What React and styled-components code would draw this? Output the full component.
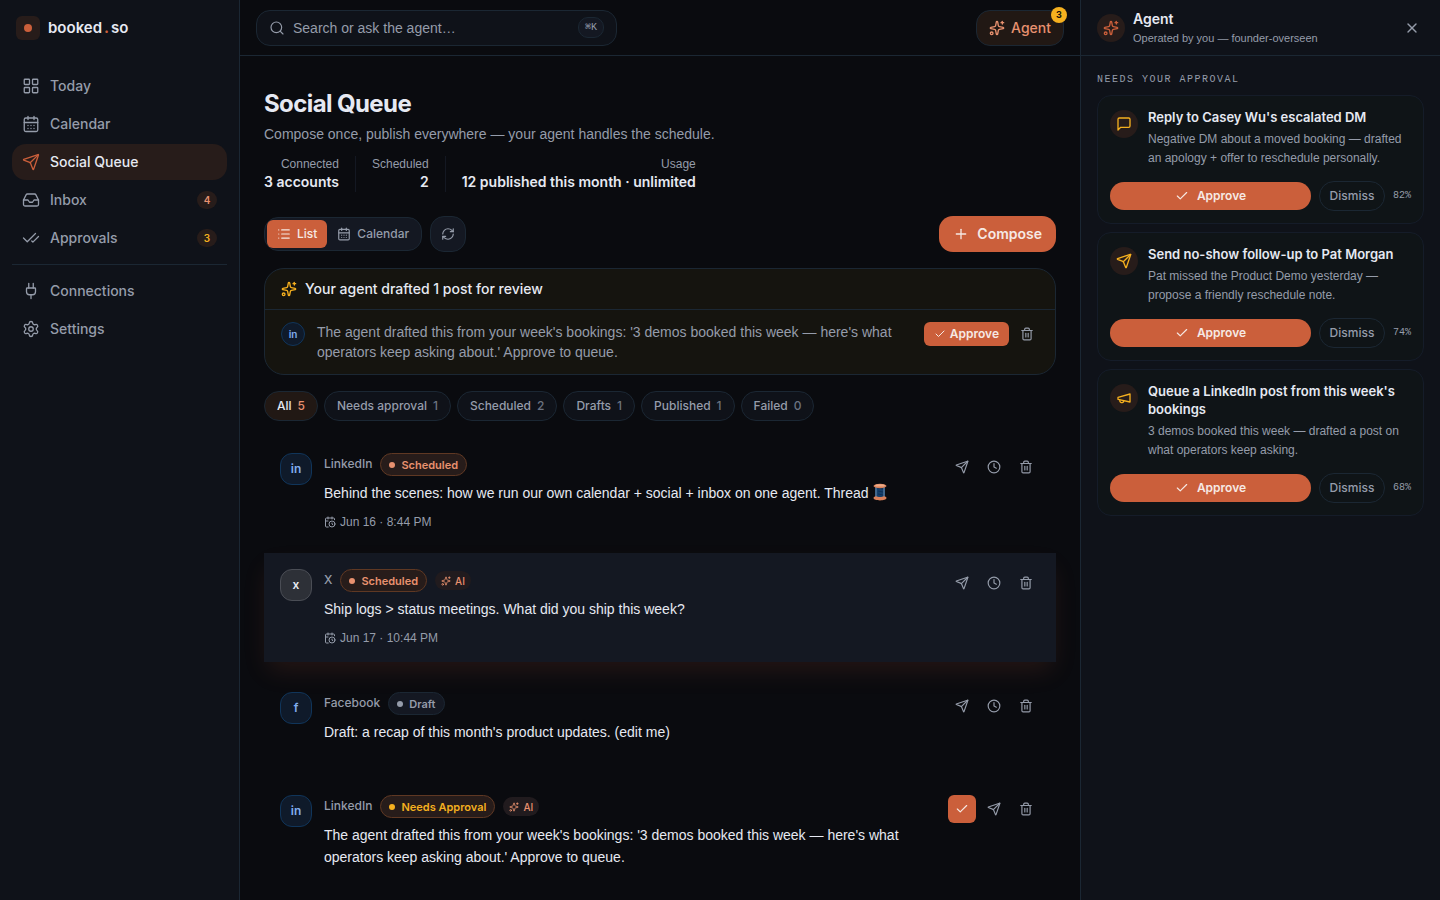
import React from "react";
import styled, { createGlobalStyle, css } from "styled-components";
import {
  LayoutGrid, CalendarDays, Send, Inbox, CheckCheck, Plug, Settings, Search,
  Sparkles, X, Check, List, RefreshCw, Plus, Trash2, Clock, CalendarClock,
} from "lucide-react";

const c = {
  bg: "#0a0b0f",
  side: "#0f1219",
  raised: "#141822",
  line: "#1b2733",
  faint: "#151c29",
  text: "#e6e9f2",
  muted: "#959caa",
  dim: "#6b7280",
  accent: "#cb5f3b",
  peach: "#e8916f",
  tint: "#271c1a",
  tintDark: "#211814",
  amber: "#f5b01f",
};
const prose = `"Liberation Sans", Arial, sans-serif`;

const GlobalStyle = createGlobalStyle`
  * { box-sizing: border-box; }
  body { margin: 0; background: ${c.bg}; }
  body, button, input {
    font-family: Inter, "Liberation Sans", sans-serif;
    font-size: 14px;
    line-height: 20px;
    color: ${c.text};
  }
  h1, h2, h3, p, ul, dl, dd { margin: 0; padding: 0; }
  p, dt, input { font-family: ${prose}; }
  ul { list-style: none; }
  button { border: 0; padding: 0; background: none; cursor: pointer; }
  a { color: inherit; text-decoration: none; }
  svg { flex: none; display: block; }
`;

const Shell = styled.div`
  display: grid;
  grid-template-columns: 240px minmax(0, 1fr) 360px;
  height: 100vh;
  overflow: hidden;
`;

/* Sidebar */
const Sidebar = styled.aside`
  background: ${c.side};
  border-right: 1px solid ${c.line};
`;
const Brand = styled.a`
  display: flex;
  align-items: center;
  gap: 8px;
  height: 56px;
  padding: 0 16px;
  font-size: 15px;
  font-weight: 600;
`;
const BrandMark = styled.span`
  display: grid;
  place-items: center;
  width: 24px;
  height: 24px;
  border-radius: 6px;
  background: ${c.tint};
  &::after {
    content: "";
    width: 8px;
    height: 8px;
    border-radius: 50%;
    background: ${c.accent};
  }
`;
const BrandName = styled.span`
  display: flex;
  gap: 2px;
`;
const BrandDot = styled.span`
  font-weight: 700;
  color: ${c.accent};
`;
const NavList = styled.ul`
  display: grid;
  gap: 2px;
  margin: 0 12px;
  padding: ${(p) => (p.$second ? "8px 0" : "12px 0 8px")};
  border-top: ${(p) => (p.$second ? `1px solid ${c.line}` : "0")};
`;
const NavLink = styled.a`
  display: flex;
  align-items: center;
  gap: 10px;
  height: 36px;
  padding: 0 10px;
  border-radius: 14px;
  font-weight: 500;
  color: ${(p) => (p.$active ? c.text : c.muted)};
  background: ${(p) => (p.$active ? c.tint : "transparent")};
  svg { color: ${(p) => (p.$active ? c.accent : "inherit")}; }
`;
const Count = styled.span`
  margin-left: auto;
  width: 20px;
  border-radius: 9px;
  background: ${c.tint};
  color: ${(p) => p.$color};
  font-size: 10px;
  font-weight: 600;
  line-height: 18px;
  text-align: center;
`;

/* Centre column */
const Center = styled.div`
  display: flex;
  flex-direction: column;
  min-height: 0;
`;
const TopBar = styled.header`
  display: flex;
  align-items: center;
  justify-content: space-between;
  flex: none;
  height: 56px;
  padding: 0 16px;
  border-bottom: 1px solid ${c.line};
`;
const SearchBox = styled.label`
  display: flex;
  align-items: center;
  gap: 8px;
  width: 100%;
  max-width: 361px;
  height: 36px;
  padding: 0 12px;
  border: 1px solid ${c.line};
  border-radius: 14px;
  background: ${c.side};
  color: ${c.muted};
`;
const SearchInput = styled.input`
  flex: 1;
  min-width: 0;
  padding: 0;
  border: 0;
  outline: 0;
  background: none;
  &::placeholder { color: ${c.muted}; opacity: 1; }
`;
const Kbd = styled.kbd`
  width: 26px;
  border: 1px solid ${c.line};
  border-radius: 10px;
  background: ${c.raised};
  font-family: "Liberation Mono", "DejaVu Sans Mono", monospace;
  font-size: 10px;
  line-height: 19px;
  text-align: center;
`;
const AgentButton = styled.button`
  position: relative;
  display: flex;
  align-items: center;
  gap: 6px;
  height: 36px;
  padding: 0 12px;
  border: 1px solid ${c.line};
  border-radius: 14px;
  background: ${c.tintDark};
  color: ${c.peach};
  font-weight: 500;
`;
const AgentBadge = styled.span`
  position: absolute;
  top: -4px;
  right: -4px;
  width: 16px;
  border-radius: 8px;
  background: ${c.amber};
  color: #14100a;
  font-size: 9px;
  font-weight: 700;
  line-height: 16px;
  text-align: center;
`;
const Content = styled.main`
  flex: 1;
  min-height: 0;
  padding: 32px 24px 0;
  overflow: hidden;
`;
const Title = styled.h1`
  font-size: 24px;
  line-height: 32px;
  font-weight: 700;
  letter-spacing: -0.6px;
`;
const Subtitle = styled.p`
  margin-top: 4px;
  color: ${c.muted};
`;
const Stats = styled.dl`
  display: flex;
  align-items: center;
  margin-top: 12px;
`;
const Stat = styled.div`
  text-align: right;
  & + & {
    margin-left: 16px;
    padding-left: 16px;
    border-left: 1px solid ${c.raised};
  }
  dt { font-size: 12px; line-height: 16px; color: ${c.muted}; }
  dd { font-weight: 600; }
`;
const Toolbar = styled.div`
  display: flex;
  align-items: center;
  gap: 8px;
  margin: 24px 0 16px;
`;
const Segments = styled.div`
  display: flex;
  padding: 2px;
  border: 1px solid ${c.line};
  border-radius: 14px;
  background: ${c.raised};
`;
const Segment = styled.button`
  display: flex;
  align-items: center;
  gap: 6px;
  height: 28px;
  padding: 0 10px;
  border-radius: 6px;
  font-size: 12px;
  font-weight: 500;
  color: ${(p) => (p.$active ? "#f6e9e4" : c.muted)};
  background: ${(p) => (p.$active ? c.accent : "transparent")};
`;
const Refresh = styled.button`
  display: grid;
  place-items: center;
  width: 36px;
  height: 36px;
  border: 1px solid ${c.line};
  border-radius: 14px;
  background: ${c.raised};
  color: ${c.muted};
`;
const Compose = styled.button`
  display: flex;
  align-items: center;
  gap: 8px;
  height: 36px;
  margin-left: auto;
  padding: 0 14px;
  border-radius: 14px;
  background: ${c.accent};
  color: #f6e9e4;
  font-weight: 600;
`;
const Drafted = styled.section`
  border: 1px solid ${c.line};
  border-radius: 20px;
  background: #15140f;
`;
const DraftedHead = styled.header`
  display: flex;
  align-items: center;
  gap: 8px;
  padding: 10px 16px;
  border-bottom: 1px solid ${c.line};
  color: ${c.amber};
  h2 { font-size: 14px; font-weight: 500; color: ${c.text}; }
`;
const DraftedBody = styled.div`
  display: flex;
  align-items: flex-start;
  gap: 12px;
  padding: 12px 16px;
  p { flex: 1; color: ${c.muted}; }
`;
const DraftedActions = styled.div`
  display: flex;
  gap: 6px;
`;
const SmallApprove = styled.button`
  display: flex;
  align-items: center;
  gap: 4px;
  height: 24px;
  padding: 0 10px;
  border-radius: 6px;
  background: ${c.accent};
  color: #f6e9e4;
  font-size: 12px;
  font-weight: 600;
`;
const tones = {
  blue: css`border-color: #10355a; background: #0f1a2a; color: #82adee;`,
  grey: css`border-color: #4a4d55; background: #2d3037; color: ${c.text};`,
};
const Avatar = styled.span`
  display: grid;
  place-items: center;
  flex: none;
  width: ${(p) => (p.$small ? 24 : 32)}px;
  height: ${(p) => (p.$small ? 24 : 32)}px;
  border: 1px solid;
  border-radius: 12px;
  font-size: ${(p) => (p.$small ? 10 : 12)}px;
  font-weight: 600;
  ${(p) => tones[p.$tone]}
`;
const Filters = styled.div`
  display: flex;
  gap: 6px;
  margin: 16px 0;
`;
const Filter = styled.button`
  display: flex;
  align-items: center;
  gap: 6px;
  height: 30px;
  padding: 0 12px;
  border: 1px solid ${c.line};
  border-radius: 15px;
  background: ${(p) => (p.$active ? c.tintDark : c.side)};
  color: ${(p) => (p.$active ? c.text : c.muted)};
  font-size: 12px;
  font-weight: 500;
  span { color: ${(p) => (p.$active ? c.peach : c.dim)}; }
`;
const Posts = styled.ul`
  display: grid;
  gap: 7px;
`;
const Post = styled.li`
  display: flex;
  align-items: flex-start;
  gap: 12px;
  min-height: 96px;
  padding: 16px;
  ${(p) =>
    p.$raised &&
    css`
      margin-bottom: 7px;
      background: ${c.raised};
      box-shadow: 0 12px 24px -4px rgba(203, 95, 59, 0.14);
    `}
`;
const PostBody = styled.div`
  flex: 1;
  min-width: 0;
`;
const PostMeta = styled.div`
  display: flex;
  align-items: flex-start;
  gap: 8px;
  height: 23px;
  font-size: 12px;
  font-weight: 500;
  line-height: 22px;
  color: ${c.muted};
`;
const statusTones = {
  scheduled: css`border-color: #5f3823; background: ${c.tint}; color: ${c.peach};`,
  approval: css`border-color: #5f3823; background: ${c.tint}; color: ${c.amber};`,
  draft: css`border-color: ${c.line}; background: ${c.raised}; color: ${c.muted};`,
};
const Status = styled.span`
  display: flex;
  align-items: center;
  gap: 6px;
  height: 23px;
  padding: 0 8px;
  border: 1px solid;
  border-radius: 12px;
  font-size: 11px;
  font-weight: 600;
  ${(p) => statusTones[p.$tone]}
  &::before {
    content: "";
    width: 6px;
    height: 6px;
    border-radius: 50%;
    background: currentColor;
  }
`;
const AiTag = styled.span`
  display: flex;
  align-items: center;
  gap: 4px;
  height: 19px;
  margin-top: 2px;
  padding: 0 6px;
  border-radius: 10px;
  background: #211b1e;
  color: ${c.peach};
  font-size: 10px;
`;
const PostText = styled.p`
  margin-top: 6px;
  line-height: 22px;
`;
const PostDate = styled.p`
  display: flex;
  align-items: center;
  gap: 4px;
  margin-top: 10px;
  font-size: 12px;
  line-height: 16px;
  color: ${c.muted};
`;
const PostActions = styled.div`
  display: flex;
  gap: 4px;
`;
const IconButton = styled.button`
  display: grid;
  place-items: center;
  width: ${(p) => (p.$small ? 24 : 28)}px;
  height: ${(p) => (p.$small ? 24 : 28)}px;
  border-radius: 6px;
  color: ${(p) => (p.$filled ? "#f6e9e4" : c.muted)};
  background: ${(p) => (p.$filled ? c.accent : "transparent")};
`;
const InlineSpool = styled.svg`
  display: inline-block;
  vertical-align: -3px;
`;

/* Agent panel */
const Panel = styled.aside`
  background: ${c.side};
  border-left: 1px solid ${c.line};
`;
const PanelHead = styled.header`
  display: flex;
  align-items: center;
  gap: 8px;
  height: 56px;
  padding: 0 16px;
  border-bottom: 1px solid ${c.line};
  h2 { font-size: 14px; font-weight: 600; line-height: 20px; }
  p { font-size: 11px; line-height: 18px; color: ${c.muted}; }
  > div { flex: 1; }
`;
const Disc = styled.span`
  display: grid;
  place-items: center;
  flex: none;
  width: 28px;
  height: 28px;
  border-radius: 50%;
  background: ${c.tint};
  color: ${(p) => p.$color};
`;
const PanelBody = styled.div`
  display: grid;
  gap: 8px;
  padding: 16px 16px 0;
`;
const PanelLabel = styled.h3`
  font-family: "Liberation Mono", monospace;
  font-size: 10px;
  font-weight: 400;
  line-height: 15px;
  letter-spacing: 1.5px;
  text-transform: uppercase;
  color: ${c.muted};
`;
const Card = styled.article`
  padding: 12px;
  border: 1px solid ${c.faint};
  border-radius: 14px;
  background: #0f1417;
`;
const CardTop = styled.div`
  display: flex;
  gap: 10px;
  h3 { font-size: 13px; font-weight: 600; line-height: 18px; }
  p { margin-top: 4px; font-size: 12px; line-height: 19px; color: ${c.muted}; }
  ${Disc} { margin-top: 2px; }
`;
const CardActions = styled.div`
  display: flex;
  align-items: center;
  gap: 8px;
  margin-top: 13px;
  font-size: 12px;
`;
const Approve = styled.button`
  display: flex;
  align-items: center;
  justify-content: center;
  gap: 8px;
  flex: 1;
  height: 28px;
  border-radius: 14px;
  background: ${c.accent};
  color: #f6e9e4;
  font-size: 12px;
  font-weight: 600;
`;
const Dismiss = styled.button`
  width: 66px;
  height: 30px;
  border: 1px solid ${c.line};
  border-radius: 15px;
  color: ${c.muted};
  font-size: 12px;
  font-weight: 500;
`;
const Score = styled.span`
  font-family: "Liberation Mono", monospace;
  font-size: 10px;
  color: ${c.muted};
`;

const stroke = {
  viewBox: "0 0 24 24", fill: "none", stroke: "currentColor",
  strokeLinecap: "round", strokeLinejoin: "round", "aria-hidden": true,
};
const Message = ({ size, strokeWidth }) => (
  <svg width={size} height={size} strokeWidth={strokeWidth} {...stroke}>
    <path d="M21 15a2 2 0 0 1-2 2H7l-4 4V5a2 2 0 0 1 2-2h14a2 2 0 0 1 2 2z" />
  </svg>
);
const Megaphone = ({ size, strokeWidth }) => (
  <svg width={size} height={size} strokeWidth={strokeWidth} {...stroke}>
    <path d="m3 11 18-5v12L3 14v-3z" />
    <path d="M11.6 16.8a3 3 0 1 1-5.8-1.6" />
  </svg>
);
const Spool = () => (
  <InlineSpool width="16" height="18" viewBox="0 0 16 18" role="img" aria-label="Thread">
    <rect x="3" y="3" width="10" height="12" fill="#153f6b" />
    <path d="M4 3v12M12 4v11" stroke="#6c8fae" strokeWidth="1" />
    <path d="M6 5l5 1M6 8l5 1M6 11l5 1" stroke="#0d2f55" strokeWidth="1" />
    <ellipse cx="8" cy="3" rx="6.5" ry="2.2" fill="#d9805a" />
    <ellipse cx="8" cy="2.4" rx="5" ry="1.2" fill="#efab86" />
    <path d="M1.500 15c0-1.200 1.500-1.600 2.500-1.800 2 .9 6 .9 8 0 1 .2 2.500.6 2.500 1.800 0 3.200-13 3.200-13 0z" fill="#d9805a" />
  </InlineSpool>
);

const mainNav = [
  { label: "Today", Icon: LayoutGrid },
  { label: "Calendar", Icon: CalendarDays },
  { label: "Social Queue", Icon: Send, active: true },
  { label: "Inbox", Icon: Inbox, count: 4, color: c.peach },
  { label: "Approvals", Icon: CheckCheck, count: 3, color: c.amber },
];
const moreNav = [
  { label: "Connections", Icon: Plug },
  { label: "Settings", Icon: Settings },
];
const filters = [
  ["All", 5], ["Needs approval", 1], ["Scheduled", 2],
  ["Drafts", 1], ["Published", 1], ["Failed", 0],
];
const agentDraft =
  "The agent drafted this from your week's bookings: '3 demos booked this week — here's what operators keep asking about.' Approve to queue.";
const posts = [
  { mark: "in", tone: "blue", name: "LinkedIn", status: "Scheduled", kind: "scheduled",
    text: <>Behind the scenes: how we run our own calendar + social + inbox on one agent. Thread <Spool /></>,
    date: "Jun 16 · 8:44 PM" },
  { mark: "x", tone: "grey", name: "X", status: "Scheduled", kind: "scheduled", ai: true, raised: true,
    text: "Ship logs > status meetings. What did you ship this week?", date: "Jun 17 · 10:44 PM" },
  { mark: "f", tone: "blue", name: "Facebook", status: "Draft", kind: "draft",
    text: "Draft: a recap of this month's product updates. (edit me)" },
  { mark: "in", tone: "blue", name: "LinkedIn", status: "Needs Approval", kind: "approval", ai: true,
    text: agentDraft },
];
const tasks = [
  { Icon: Message, title: "Reply to Casey Wu's escalated DM", score: "82%",
    text: "Negative DM about a moved booking — drafted an apology + offer to reschedule personally." },
  { Icon: Send, title: "Send no-show follow-up to Pat Morgan", score: "74%",
    text: "Pat missed the Product Demo yesterday — propose a friendly reschedule note." },
  { Icon: Megaphone, title: "Queue a LinkedIn post from this week's bookings", score: "68%",
    text: "3 demos booked this week — drafted a post on what operators keep asking." },
];

function Nav({ items, second }) {
  return (
    <NavList $second={second}>
      {items.map(({ label, Icon, active, count, color }) => (
        <li key={label}>
          <NavLink href="#" $active={active}>
            <Icon size={18} strokeWidth={1.75} />
            {label}
            {count && <Count $color={color}>{count}</Count>}
          </NavLink>
        </li>
      ))}
    </NavList>
  );
}

function PostRow({ post }) {
  const needsApproval = post.kind === "approval";
  return (
    <Post $raised={post.raised}>
      <Avatar $tone={post.tone}>{post.mark}</Avatar>
      <PostBody>
        <PostMeta>
          <span>{post.name}</span>
          <Status $tone={post.kind}>{post.status}</Status>
          {post.ai && <AiTag><Sparkles size={10} />AI</AiTag>}
        </PostMeta>
        <PostText>{post.text}</PostText>
        {post.date && <PostDate><CalendarClock size={12} />{post.date}</PostDate>}
      </PostBody>
      <PostActions>
        {needsApproval && <IconButton $filled aria-label="Approve"><Check size={14} /></IconButton>}
        <IconButton aria-label="Publish now"><Send size={14} /></IconButton>
        {!needsApproval && <IconButton aria-label="Reschedule"><Clock size={14} /></IconButton>}
        <IconButton aria-label="Delete"><Trash2 size={14} /></IconButton>
      </PostActions>
    </Post>
  );
}

export default function App() {
  return (
    <>
      <GlobalStyle />
      <Shell>
        <Sidebar>
          <Brand href="#">
            <BrandMark />
            <BrandName>booked<BrandDot>.</BrandDot>so</BrandName>
          </Brand>
          <nav>
            <Nav items={mainNav} />
            <Nav items={moreNav} second />
          </nav>
        </Sidebar>

        <Center>
          <TopBar>
            <SearchBox>
              <Search size={16} strokeWidth={1.75} />
              <SearchInput aria-label="Search" placeholder="Search or ask the agent…" />
              <Kbd>⌘K</Kbd>
            </SearchBox>
            <AgentButton>
              <Sparkles size={16} />
              Agent
              <AgentBadge>3</AgentBadge>
            </AgentButton>
          </TopBar>

          <Content>
            <Title>Social Queue</Title>
            <Subtitle>Compose once, publish everywhere — your agent handles the schedule.</Subtitle>
            <Stats>
              <Stat><dt>Connected</dt><dd>3 accounts</dd></Stat>
              <Stat><dt>Scheduled</dt><dd>2</dd></Stat>
              <Stat><dt>Usage</dt><dd>12 published this month · unlimited</dd></Stat>
            </Stats>

            <Toolbar>
              <Segments>
                <Segment $active><List size={14} />List</Segment>
                <Segment><CalendarDays size={14} />Calendar</Segment>
              </Segments>
              <Refresh aria-label="Refresh"><RefreshCw size={14} /></Refresh>
              <Compose><Plus size={16} />Compose</Compose>
            </Toolbar>

            <Drafted>
              <DraftedHead>
                <Sparkles size={16} />
                <h2>Your agent drafted 1 post for review</h2>
              </DraftedHead>
              <DraftedBody>
                <Avatar $tone="blue" $small>in</Avatar>
                <p>{agentDraft}</p>
                <DraftedActions>
                  <SmallApprove><Check size={12} />Approve</SmallApprove>
                  <IconButton $small aria-label="Delete"><Trash2 size={14} /></IconButton>
                </DraftedActions>
              </DraftedBody>
            </Drafted>

            <Filters>
              {filters.map(([label, n], i) => (
                <Filter key={label} $active={i === 0}>{label}<span>{n}</span></Filter>
              ))}
            </Filters>

            <Posts>
              {posts.map((post, i) => <PostRow key={i} post={post} />)}
            </Posts>
          </Content>
        </Center>

        <Panel>
          <PanelHead>
            <Disc $color={c.accent}><Sparkles size={16} /></Disc>
            <div>
              <h2>Agent</h2>
              <p>Operated by you — founder-overseen</p>
            </div>
            <IconButton $small aria-label="Close"><X size={16} /></IconButton>
          </PanelHead>
          <PanelBody>
            <PanelLabel>Needs your approval</PanelLabel>
            {tasks.map(({ Icon, title, text, score }) => (
              <Card key={title}>
                <CardTop>
                  <Disc $color={c.amber}><Icon size={16} strokeWidth={2} /></Disc>
                  <div>
                    <h3>{title}</h3>
                    <p>{text}</p>
                  </div>
                </CardTop>
                <CardActions>
                  <Approve><Check size={14} />Approve</Approve>
                  <Dismiss>Dismiss</Dismiss>
                  <Score>{score}</Score>
                </CardActions>
              </Card>
            ))}
          </PanelBody>
        </Panel>
      </Shell>
    </>
  );
}
